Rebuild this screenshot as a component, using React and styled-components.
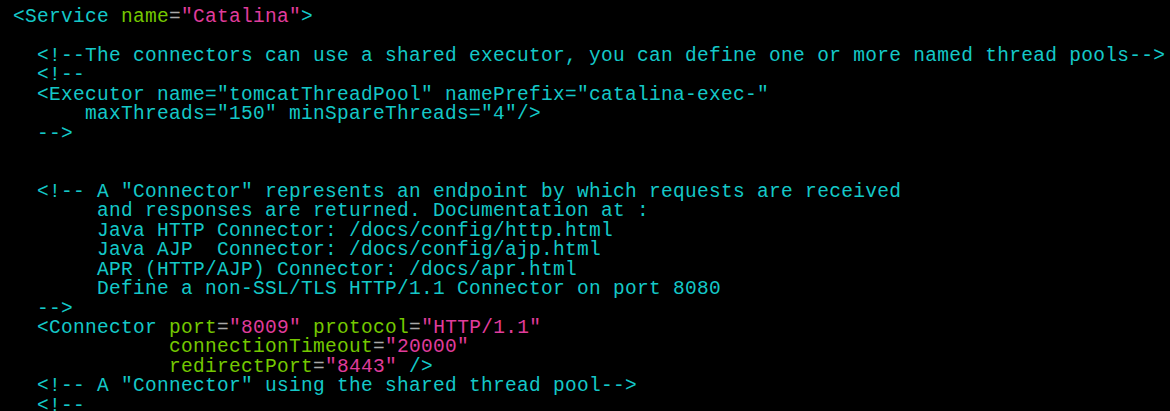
import styled, { createGlobalStyle } from 'styled-components'

const GlobalStyle = createGlobalStyle`
  html, body {
    margin: 0;
    padding: 0;
    background: #000;
  }
`

const colors = {
  tag: '#14c8c8',
  attr: '#74c800',
  eq: '#a8a8a8',
  value: '#e03c9c',
  comment: '#14c8c8',
}

const Screen = styled.div`
  width: 1170px;
  height: 411px;
  overflow: hidden;
  background: #000;
  padding: 8px 0 0 13px;
  box-sizing: border-box;
  font-family: 'Liberation Mono', monospace;
  font-size: 19.5px;
  letter-spacing: 0.3px;
  line-height: 19.45px;
  color: ${colors.comment};
`

const Line = styled.div`
  height: 19.45px;
  white-space: pre;
`

const Token = styled.span`
  color: ${(props) => colors[props.$kind]};
`

// each line is a list of [kind, text]
const lines = [
  [['tag', '<Service '], ['attr', 'name'], ['eq', '='], ['value', '"Catalina"'], ['tag', '>']],
  [],
  [['comment', '  <!--The connectors can use a shared executor, you can define one or more named thread pools-->']],
  [['comment', '  <!--']],
  [['comment', '  <Executor name="tomcatThreadPool" namePrefix="catalina-exec-"']],
  [['comment', '      maxThreads="150" minSpareThreads="4"/>']],
  [['comment', '  -->']],
  [],
  [],
  [['comment', '  <!-- A "Connector" represents an endpoint by which requests are received']],
  [['comment', '       and responses are returned. Documentation at :']],
  [['comment', '       Java HTTP Connector: /docs/config/http.html']],
  [['comment', '       Java AJP  Connector: /docs/config/ajp.html']],
  [['comment', '       APR (HTTP/AJP) Connector: /docs/apr.html']],
  [['comment', '       Define a non-SSL/TLS HTTP/1.1 Connector on port 8080']],
  [['comment', '  -->']],
  [
    ['tag', '  <Connector '],
    ['attr', 'port'],
    ['eq', '='],
    ['value', '"8009"'],
    ['tag', ' '],
    ['attr', 'protocol'],
    ['eq', '='],
    ['value', '"HTTP/1.1"'],
  ],
  [['tag', '             '], ['attr', 'connectionTimeout'], ['eq', '='], ['value', '"20000"']],
  [['tag', '             '], ['attr', 'redirectPort'], ['eq', '='], ['value', '"8443"'], ['tag', ' />']],
  [['comment', '  <!-- A "Connector" using the shared thread pool-->']],
  [['comment', '  <!--']],
]

const App = () => (
  <>
    <GlobalStyle />
    <Screen>
      {lines.map((tokens, i) => (
        <Line key={i}>
          {tokens.map(([kind, text], j) => (
            <Token key={j} $kind={kind}>
              {text}
            </Token>
          ))}
        </Line>
      ))}
    </Screen>
  </>
)

export default App
